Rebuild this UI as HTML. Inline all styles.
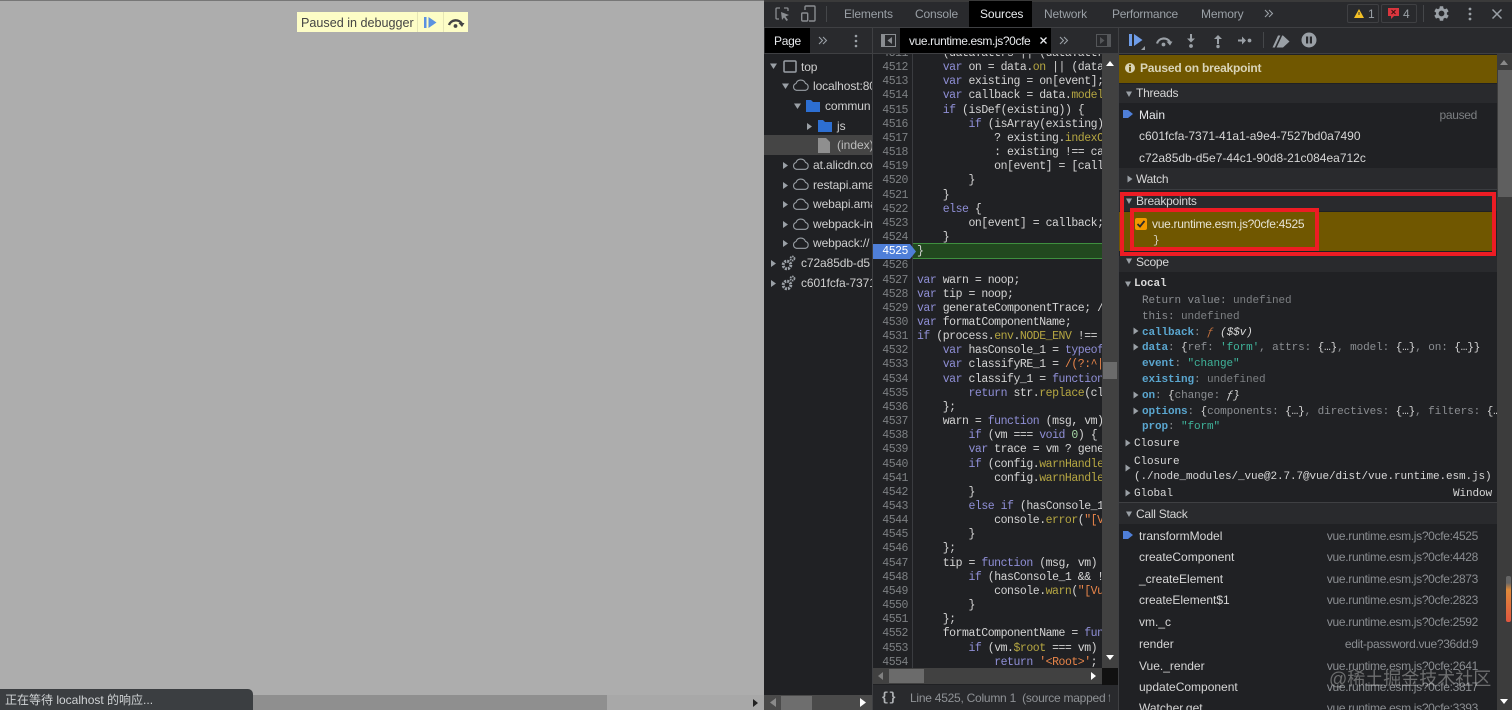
<!DOCTYPE html>
<html lang="zh">
<head>
<meta charset="utf-8">
<title>DevTools</title>
<style>
html,body{margin:0;padding:0;width:1512px;height:710px;overflow:hidden;background:#202124}
body{position:relative;font-family:"Liberation Sans","Noto Sans CJK SC",sans-serif;font-size:12px;color:#d6d6d6;filter:blur(.3px)}
.a{position:absolute}
.t{position:absolute;white-space:pre;line-height:16px}
.m{font-family:"Liberation Mono",monospace;font-size:11px;letter-spacing:-.1px}
svg{position:absolute;display:block;overflow:visible}
pre{margin:0;font-family:"Liberation Mono",monospace;font-size:11.5px;letter-spacing:-.47px;line-height:14.16px}
.k{color:#8f8fd6}.p{color:#b5a642}.s{color:#e8854a}.n{color:#a6d8a6}.c{color:#d4d4d4}
.tab{color:#9aa0a6;top:6px;letter-spacing:-.15px}
.sec{left:1136px;color:#d6d6d6;letter-spacing:-.25px}
.src{color:#8a8d91;text-align:right;right:34px;letter-spacing:-.32px}
.r{background:#3a3c40;height:1px;left:1119px;width:378px}
.key{color:#5aa6cf;font-weight:bold}
.g{color:#8b8e92}
.w{color:#d8d8d8}
.tree{color:#cfcfcf;letter-spacing:-.1px}
.st{color:#d6d6d6;left:1139px}
</style>
</head>
<body>
<!-- left page -->
<div class="a" style="left:0;top:0;width:764px;height:710px;background:#adadad"></div>
<div class="a" style="left:0;top:0;width:764px;height:1px;background:#777"></div>
<div class="a" style="left:0;top:695px;width:764px;height:15px;background:#a8a8a8"></div>
<div class="a" style="left:253px;top:695px;width:354px;height:15px;background:#8f8f8f"></div>
<svg style="left:753px;top:699px" width="5" height="8"><path d="M0 0L5 4L0 8Z" fill="#222"/></svg>
<div class="a" style="left:0;top:689px;width:253px;height:21px;background:#3b3e41;border-top-right-radius:5px"></div>
<div class="t" style="left:5px;top:692px;color:#cfd2d4;font-size:12px">正在等待 localhost 的响应...</div>
<!-- paused overlay -->
<div class="a" style="left:297px;top:12px;width:171px;height:20px;background:#fdfdc6"></div>
<div class="a" style="left:417px;top:12px;width:1px;height:20px;background:#e6e6b5"></div>
<div class="a" style="left:443px;top:12px;width:1px;height:20px;background:#e6e6b5"></div>
<div class="t" style="left:301px;top:15px;color:#444;font-size:12.6px">Paused in debugger</div>
<svg style="left:424px;top:17px" width="13" height="11"><rect x="0" y="0" width="2.500" height="11" fill="#5b92e0"/><path d="M4.500 0L12.500 5.500L4.500 11Z" fill="#5b92e0"/></svg>
<svg style="left:447px;top:17px" width="18" height="11"><path d="M2 8A7 6.500 0 0 1 15 7" fill="none" stroke="#444" stroke-width="2.400"/><path d="M11.500 6L17.500 6L15 10Z" fill="#444"/><circle cx="8.500" cy="9" r="1.900" fill="#444"/></svg>

<!-- top bar -->
<div class="a" style="left:764px;top:0;width:748px;height:710px;background:#292a2d"></div>
<div class="a" style="left:764px;top:0;width:748px;height:2px;background:#3a3a3a"></div>
<div class="a" style="left:764px;top:27px;width:748px;height:1px;background:#3f4043"></div>
<div class="a" style="left:969px;top:1px;width:63px;height:26px;background:#000"></div>
<svg style="left:775px;top:7px" width="15" height="14"><path d="M5 1H2Q1 1 1 2V11Q1 12 2 12H4M9 1H12Q13 1 13 2V4" fill="none" stroke="#8a8d91" stroke-width="1.300"/><path d="M6 5L14 8L10.500 9.500L13 13L11.500 14L9 10.500L7 13Z" fill="#8a8d91"/></svg>
<svg style="left:800px;top:5px" width="16" height="17"><path d="M5 5V2Q5 1 6 1H14Q15 1 15 2V15Q15 16 14 16H9" fill="none" stroke="#8a8d91" stroke-width="1.400"/><rect x="1.700" y="8" width="6" height="8" rx="1" fill="none" stroke="#8a8d91" stroke-width="1.400"/></svg>
<div class="a" style="left:826px;top:6px;width:1px;height:16px;background:#45474a"></div>
<div class="t tab" style="left:844px">Elements</div>
<div class="t tab" style="left:915px">Console</div>
<div class="t" style="left:980px;top:6px;color:#e8eaed;letter-spacing:-.1px">Sources</div>
<div class="t tab" style="left:1044px">Network</div>
<div class="t tab" style="left:1112px;letter-spacing:-.25px">Performance</div>
<div class="t tab" style="left:1201px">Memory</div>
<svg style="left:1265px;top:10px" width="8" height="7"><path d="M0 0L3.500 3.500L0 7M4 0L7.500 3.500L4 7" fill="none" stroke="#9aa0a6" stroke-width="1.100"/></svg>
<div class="a" style="left:1347px;top:4px;width:32px;height:19px;border:1px solid #3f4043;border-radius:2px;box-sizing:border-box"></div>
<div class="a" style="left:1381px;top:4px;width:36px;height:19px;border:1px solid #3f4043;border-radius:2px;box-sizing:border-box"></div>
<svg style="left:1354px;top:9px" width="10" height="9"><path d="M5 0L10 9H0Z" fill="#f4c025"/><rect x="4.500" y="3" width="1" height="3" fill="#333"/></svg>
<div class="t g" style="left:1368px;top:6px;color:#9aa0a6">1</div>
<svg style="left:1388px;top:8px" width="11" height="11"><path d="M0 0H11V8H6L3 11V8H0Z" fill="#d9363e"/><path d="M3.500 2L7.500 6M7.500 2L3.500 6" stroke="#3a1010" stroke-width="1"/></svg>
<div class="t g" style="left:1403px;top:6px;color:#9aa0a6">4</div>
<div class="a" style="left:1423px;top:5px;width:1px;height:17px;background:#45474a"></div>
<svg style="left:1434px;top:6px" width="15" height="15" viewBox="3 3 18 18"><path fill="#9aa0a6" d="M19.400 13a7.500 7.500 0 0 0 0-2l2.100-1.600-2-3.500-2.500 1a7.500 7.500 0 0 0-1.700-1L15 3.300h-4l-.4 2.600a7.500 7.500 0 0 0-1.700 1l-2.500-1-2 3.500L6.500 11a7.500 7.500 0 0 0 0 2l-2.100 1.600 2 3.500 2.500-1a7.500 7.500 0 0 0 1.700 1l.4 2.600h4l.4-2.600a7.500 7.500 0 0 0 1.700-1l2.500 1 2-3.500zM13 15.500a3.500 3.500 0 1 1 0-7 3.500 3.500 0 0 1 0 7z" transform="translate(-1 0)"/></svg>
<svg style="left:1468px;top:7px" width="4" height="14"><circle cx="2" cy="2" r="1.400" fill="#9aa0a6"/><circle cx="2" cy="7" r="1.400" fill="#9aa0a6"/><circle cx="2" cy="12" r="1.400" fill="#9aa0a6"/></svg>
<svg style="left:1492px;top:9px" width="10" height="10"><path d="M.5.500L9.500 9.500M9.500.500L.5 9.500" stroke="#9aa0a6" stroke-width="1.500"/></svg>

<!-- second toolbar -->
<div class="a" style="left:764px;top:53px;width:748px;height:1px;background:#3f4043"></div>
<div class="a" style="left:765px;top:28px;width:45px;height:25px;background:#000"></div>
<div class="t" style="left:774px;top:33px;color:#e8eaed;letter-spacing:-.3px">Page</div>
<svg style="left:819px;top:37px" width="8" height="7"><path d="M0 0L3.500 3.500L0 7M4 0L7.500 3.500L4 7" fill="none" stroke="#9aa0a6" stroke-width="1.100"/></svg>
<svg style="left:854px;top:34px" width="4" height="14"><circle cx="2" cy="2" r="1.300" fill="#9aa0a6"/><circle cx="2" cy="7" r="1.300" fill="#9aa0a6"/><circle cx="2" cy="12" r="1.300" fill="#9aa0a6"/></svg>
<div class="a" style="left:872px;top:28px;width:1px;height:682px;background:#3f4043"></div>
<svg style="left:881px;top:34px" width="15" height="13"><rect x=".5" y=".5" width="14" height="12" fill="none" stroke="#8a8d91"/><rect x="1" y="1" width="3" height="11" fill="#8a8d91"/><path d="M11 3V10L6.500 6.500Z" fill="#8a8d91"/></svg>
<div class="a" style="left:900px;top:28px;width:151px;height:25px;background:#000"></div>
<div class="t" style="left:909px;top:33px;color:#e8eaed;letter-spacing:-.38px">vue.runtime.esm.js?0cfe</div>
<svg style="left:1040px;top:37px" width="7" height="7"><path d="M.5.500L6.500 6.500M6.500.500L.5 6.500" stroke="#e8eaed" stroke-width="1.300"/></svg>
<svg style="left:1060px;top:37px" width="8" height="7"><path d="M0 0L3.500 3.500L0 7M4 0L7.500 3.500L4 7" fill="none" stroke="#9aa0a6" stroke-width="1.100"/></svg>
<svg style="left:1096px;top:34px" width="15" height="13"><rect x=".5" y=".5" width="14" height="12" fill="none" stroke="#55575a"/><rect x="11" y="1" width="3" height="11" fill="#55575a"/><path d="M4 3V10L8.500 6.500Z" fill="#55575a"/></svg>
<div class="a" style="left:1118px;top:28px;width:1px;height:682px;background:#3f4043"></div>
<!-- debug toolbar -->
<svg style="left:1129px;top:34px" width="16" height="15"><rect x="0" y="0" width="3" height="12" fill="#6f9de8"/><path d="M5 0L13.500 6L5 12Z" fill="#6f9de8"/><path d="M12 16H16V12Z" fill="#9aa0a6"/></svg>
<svg style="left:1155px;top:35px" width="18" height="12"><path d="M2 8.500A7 6.500 0 0 1 15 7" fill="none" stroke="#9aa0a6" stroke-width="2.200"/><path d="M11.500 6.500L17.500 6.500L15 10.500Z" fill="#9aa0a6"/><circle cx="8.500" cy="9.500" r="1.900" fill="#9aa0a6"/></svg>
<svg style="left:1186px;top:34px" width="10" height="14"><path d="M5 0V6" stroke="#9aa0a6" stroke-width="2"/><path d="M1 4.500H9L5 8.500Z" fill="#9aa0a6"/><circle cx="5" cy="12" r="1.900" fill="#9aa0a6"/></svg>
<svg style="left:1213px;top:34px" width="10" height="14"><path d="M5 4V10" stroke="#9aa0a6" stroke-width="2"/><path d="M1 5H9L5 1Z" fill="#9aa0a6"/><circle cx="5" cy="12.500" r="1.700" fill="#9aa0a6"/></svg>
<svg style="left:1238px;top:36px" width="14" height="9"><path d="M0 4.500H6" stroke="#9aa0a6" stroke-width="2"/><path d="M4 .5L8 4.500L4 8.500Z" fill="#9aa0a6"/><circle cx="11.500" cy="4.500" r="1.900" fill="#9aa0a6"/></svg>
<div class="a" style="left:1263px;top:32px;width:1px;height:16px;background:#45474a"></div>
<svg style="left:1272px;top:35px" width="18" height="13"><path d="M6 0.500H11L17.500 6.500L11 12.500H0.500Z" fill="#9aa0a6"/><path d="M3 14L10 -1" stroke="#292a2d" stroke-width="1.600"/></svg>
<svg style="left:1301px;top:32px" width="16" height="16"><circle cx="8" cy="8" r="7.500" fill="#9aa0a6"/><rect x="5" y="4.500" width="2.200" height="7" fill="#292a2d"/><rect x="8.800" y="4.500" width="2.200" height="7" fill="#292a2d"/></svg>

<!-- navigator -->
<div class="a" style="left:764px;top:54px;width:108px;height:641px;background:#202124;overflow:hidden" id="nav">
<div class="a" style="left:0;top:81px;width:108px;height:20px;background:#454545"></div>
<svg style="left:5px;top:9px" width="9" height="7"><path d="M1 .5H8L4.500 6Z" fill="#9aa0a6"/></svg>
<svg style="left:19px;top:6px" width="14" height="13"><rect x="1" y="1" width="12" height="11" rx="1" fill="none" stroke="#9aa0a6" stroke-width="1.500"/></svg>
<div class="t tree" style="left:37px;top:5px">top</div>
<svg style="left:17px;top:29px" width="9" height="7"><path d="M1 .5H8L4.500 6Z" fill="#9aa0a6"/></svg>
<svg style="left:28px;top:25px" width="18" height="12"><path d="M4.500 11.300A3.500 3.500 0 0 1 4 4.500 5 5 0 0 1 13.500 4.500 3.500 3.500 0 0 1 13.500 11.300Z" fill="none" stroke="#9aa0a6" stroke-width="1.100"/></svg>
<div class="t tree" style="left:49px;top:24px">localhost:80</div>
<svg style="left:29px;top:49px" width="9" height="7"><path d="M1 .5H8L4.500 6Z" fill="#9aa0a6"/></svg>
<svg style="left:42px;top:46px" width="14" height="12"><path d="M0 0H5L7 2H14V12H0Z" fill="#2d6fd2"/></svg>
<div class="t tree" style="left:61px;top:44px">commun</div>
<svg style="left:42px;top:68px" width="7" height="9"><path d="M1 1L6 4.500L1 8Z" fill="#9aa0a6"/></svg>
<svg style="left:54px;top:66px" width="14" height="12"><path d="M0 0H5L7 2H14V12H0Z" fill="#2d6fd2"/></svg>
<div class="t tree" style="left:73px;top:64px">js</div>
<svg style="left:54px;top:84px" width="12" height="15"><path d="M0 0H8L12 4V15H0Z" fill="#8f8f8f"/></svg>
<div class="t" style="left:73px;top:83px;color:#bdbdbd">(index)</div>
<svg style="left:18px;top:107px" width="7" height="9"><path d="M1 1L6 4.500L1 8Z" fill="#9aa0a6"/></svg>
<svg style="left:28px;top:104px" width="18" height="12"><path d="M4.500 11.300A3.500 3.500 0 0 1 4 4.500 5 5 0 0 1 13.500 4.500 3.500 3.500 0 0 1 13.500 11.300Z" fill="none" stroke="#9aa0a6" stroke-width="1.100"/></svg>
<div class="t tree" style="left:49px;top:103px">at.alicdn.co</div>
<svg style="left:18px;top:127px" width="7" height="9"><path d="M1 1L6 4.500L1 8Z" fill="#9aa0a6"/></svg>
<svg style="left:28px;top:124px" width="18" height="12"><path d="M4.500 11.300A3.500 3.500 0 0 1 4 4.500 5 5 0 0 1 13.500 4.500 3.500 3.500 0 0 1 13.500 11.300Z" fill="none" stroke="#9aa0a6" stroke-width="1.100"/></svg>
<div class="t tree" style="left:49px;top:123px">restapi.ama</div>
<svg style="left:18px;top:146px" width="7" height="9"><path d="M1 1L6 4.500L1 8Z" fill="#9aa0a6"/></svg>
<svg style="left:28px;top:144px" width="18" height="12"><path d="M4.500 11.300A3.500 3.500 0 0 1 4 4.500 5 5 0 0 1 13.500 4.500 3.500 3.500 0 0 1 13.500 11.300Z" fill="none" stroke="#9aa0a6" stroke-width="1.100"/></svg>
<div class="t tree" style="left:49px;top:142px">webapi.ama</div>
<svg style="left:18px;top:166px" width="7" height="9"><path d="M1 1L6 4.500L1 8Z" fill="#9aa0a6"/></svg>
<svg style="left:28px;top:164px" width="18" height="12"><path d="M4.500 11.300A3.500 3.500 0 0 1 4 4.500 5 5 0 0 1 13.500 4.500 3.500 3.500 0 0 1 13.500 11.300Z" fill="none" stroke="#9aa0a6" stroke-width="1.100"/></svg>
<div class="t tree" style="left:49px;top:162px">webpack-in</div>
<svg style="left:18px;top:185px" width="7" height="9"><path d="M1 1L6 4.500L1 8Z" fill="#9aa0a6"/></svg>
<svg style="left:28px;top:183px" width="18" height="12"><path d="M4.500 11.300A3.500 3.500 0 0 1 4 4.500 5 5 0 0 1 13.500 4.500 3.500 3.500 0 0 1 13.500 11.300Z" fill="none" stroke="#9aa0a6" stroke-width="1.100"/></svg>
<div class="t tree" style="left:49px;top:181px">webpack://</div>
<svg style="left:6px;top:205px" width="7" height="9"><path d="M1 1L6 4.500L1 8Z" fill="#9aa0a6"/></svg>
<svg style="left:17px;top:201px" width="15" height="16" viewBox="0 0 15 16"><circle cx="6" cy="10" r="3.800" fill="none" stroke="#9aa0a6" stroke-width="3" stroke-dasharray="2 1"/><circle cx="11.500" cy="3.500" r="2" fill="none" stroke="#9aa0a6" stroke-width="1.800" stroke-dasharray="1.500 .7"/></svg>
<div class="t tree" style="left:37px;top:201px">c72a85db-d5</div>
<svg style="left:6px;top:225px" width="7" height="9"><path d="M1 1L6 4.500L1 8Z" fill="#9aa0a6"/></svg>
<svg style="left:17px;top:221px" width="15" height="16" viewBox="0 0 15 16"><circle cx="6" cy="10" r="3.800" fill="none" stroke="#9aa0a6" stroke-width="3" stroke-dasharray="2 1"/><circle cx="11.500" cy="3.500" r="2" fill="none" stroke="#9aa0a6" stroke-width="1.800" stroke-dasharray="1.500 .7"/></svg>
<div class="t tree" style="left:37px;top:221px">c601fcfa-7371</div>
</div>
<div class="a" style="left:764px;top:695px;width:108px;height:15px;background:#4a4a4a"></div>
<div class="a" style="left:781px;top:696px;width:31px;height:14px;background:#6e6e6e"></div>
<svg style="left:770px;top:698px" width="6" height="9"><path d="M6 0L0 4.500L6 9Z" fill="#8a8a8a"/></svg>
<svg style="left:860px;top:698px" width="6" height="9"><path d="M0 0L6 4.500L0 9Z" fill="#fff"/></svg>

<!-- editor -->
<div class="a" style="left:873px;top:54px;width:245px;height:631px;background:#202124;overflow:hidden">
<div class="a" style="left:39px;top:0;width:1px;height:614px;background:#3a3c40"></div>
<div class="a" style="left:40px;top:189px;width:190px;height:16px;background:#22481f;border-top:1px solid #3f8f3f;border-bottom:1px solid #3f8f3f;box-sizing:border-box"></div>
<svg style="left:0;top:190px" width="43" height="15"><path d="M0 0H37L43 7.500L37 15H0Z" fill="#4f7fd8"/></svg>
<pre class="a" style="left:0;top:-7px;width:35px;text-align:right;color:#7d8083">4511
4512
4513
4514
4515
4516
4517
4518
4519
4520
4521
4522
4523
4524
<span style="color:#fff">4525</span>
4526
4527
4528
4529
4530
4531
4532
4533
4534
4535
4536
4537
4538
4539
4540
4541
4542
4543
4544
4545
4546
4547
4548
4549
4550
4551
4552
4553
4554</pre>
<div class="a" style="left:44px;top:0;width:185px;height:614px;overflow:hidden">
<pre class="a" style="left:0;top:-7px;color:#d4d4d4">    (data.attrs || (data.attrs
    <span class="k">var</span> on = data.<span class="p">on</span> || (data
    <span class="k">var</span> existing = on[event];
    <span class="k">var</span> callback = data.<span class="p">model</span>
    <span class="k">if</span> (isDef(existing)) {   <span style="color:#a0522d">●</span>
        <span class="k">if</span> (isArray(existing)
            ? existing.<span class="p">indexOf</span>
            : existing !== ca
            on[event] = [call
        }
    }
    <span class="k">else</span> {
        on[event] = callback;
    }
}

<span class="k">var</span> warn = noop;
<span class="k">var</span> tip = noop;
<span class="k">var</span> generateComponentTrace; /
<span class="k">var</span> formatComponentName;
<span class="k">if</span> (process.<span class="p">env</span>.<span class="p">NODE_ENV</span> !==
    <span class="k">var</span> hasConsole_1 = <span class="k">typeof</span>
    <span class="k">var</span> classifyRE_1 = <span class="s">/(?:^|</span>
    <span class="k">var</span> classify_1 = <span class="k">function</span>
        <span class="k">return</span> str.<span class="p">replace</span>(cl
    };
    warn = <span class="k">function</span> (msg, vm)
        <span class="k">if</span> (vm === <span class="k">void</span> <span class="n">0</span>) {
        <span class="k">var</span> trace = vm ? gene
        <span class="k">if</span> (config.<span class="p">warnHandle</span>
            config.<span class="p">warnHandle</span>
        }
        <span class="k">else</span> <span class="k">if</span> (hasConsole_1
            console.<span class="p">error</span>(<span class="s">"[V</span>
        }
    };
    tip = <span class="k">function</span> (msg, vm)
        <span class="k">if</span> (hasConsole_1 &amp;&amp; !
            console.<span class="p">warn</span>(<span class="s">"[Vu</span>
        }
    };
    formatComponentName = <span class="k">fun</span>
        <span class="k">if</span> (vm.<span class="p">$root</span> === vm)
            <span class="k">return</span> <span class="s">'&lt;Root&gt;'</span>;</pre>
</div>
<!-- vertical scrollbar -->
<div class="a" style="left:229px;top:0;width:16px;height:614px;background:#414141"></div>
<div class="a" style="left:230px;top:308px;width:14px;height:17px;background:#6b6b6b"></div>
<svg style="left:233px;top:7px" width="8" height="5"><path d="M0 5L4 0L8 5Z" fill="#fff"/></svg>
<svg style="left:233px;top:601px" width="8" height="5"><path d="M0 0H8L4 5Z" fill="#fff"/></svg>
<!-- horizontal scrollbar -->
<div class="a" style="left:0;top:614px;width:229px;height:16px;background:#414141"></div>
<div class="a" style="left:16px;top:615px;width:35px;height:14px;background:#6b6b6b"></div>
<div class="a" style="left:229px;top:614px;width:16px;height:17px;background:#111"></div>
<svg style="left:5px;top:618px" width="5" height="8"><path d="M5 0L0 4L5 8Z" fill="#808080"/></svg>
<svg style="left:218px;top:618px" width="5" height="8"><path d="M0 0L5 4L0 8Z" fill="#fff"/></svg>
</div>
<div class="a" style="left:873px;top:685px;width:245px;height:25px;background:#292a2d"></div>
<div class="t" style="left:881px;top:690px;color:#b0b3b6;font-family:'Liberation Mono',monospace;font-size:13px;font-weight:bold;letter-spacing:-.2px">{}</div>
<div class="a" style="left:873px;top:685px;width:237px;height:25px;overflow:hidden"><div class="t" style="left:37px;top:5px;color:#8f9296;letter-spacing:-.25px">Line 4525, Column 1  (source mapped f</div></div>

<!-- right sidebar -->
<div class="a" style="left:1119px;top:54px;width:378px;height:656px;background:#202124"></div>
<div class="a" style="left:1119px;top:55px;width:378px;height:28px;background:#705700"></div>
<svg style="left:1125px;top:63px" width="10" height="10"><circle cx="5" cy="5" r="5" fill="#d9d4b8"/><rect x="4" y="4" width="2" height="4.500" fill="#705700"/><rect x="4" y="1.500" width="2" height="1.700" fill="#705700"/></svg>
<div class="t" style="left:1140px;top:60px;color:#d9d4b8;font-weight:bold;letter-spacing:-.2px">Paused on breakpoint</div>

<div class="a" style="left:1119px;top:84px;width:378px;height:19px;background:#292a2d"></div>
<div class="r" style="top:103px"></div>
<svg style="left:1125px;top:91px" width="8" height="7"><path d="M1 .5H7L4 6Z" fill="#9aa0a6"/></svg>
<div class="t sec" style="top:85px">Threads</div>
<svg style="left:1123px;top:109px" width="10" height="10"><path d="M0 1H5L10 5L5 9H0Z" fill="#4f7fd8"/></svg>
<div class="t st" style="top:107px;color:#e8eaed">Main</div>
<div class="t src" style="top:107px;right:35px;color:#7d8083">paused</div>
<div class="r" style="top:125px"></div>
<div class="t st" style="top:128px">c601fcfa-7371-41a1-a9e4-7527bd0a7490</div>
<div class="r" style="top:146px"></div>
<div class="t st" style="top:150px">c72a85db-d5e7-44c1-90d8-21c084ea712c</div>
<div class="r" style="top:167px"></div>

<div class="a" style="left:1119px;top:168px;width:378px;height:21px;background:#292a2d"></div>
<svg style="left:1127px;top:175px" width="6" height="8"><path d="M.5 .5L5.500 4L.5 7.500Z" fill="#9aa0a6"/></svg>
<div class="t sec" style="top:171px">Watch</div>
<div class="a" style="left:1119px;top:189px;width:378px;height:1px;background:#3a3c40"></div>

<div class="a" style="left:1119px;top:192px;width:378px;height:19px;background:#292a2d"></div>
<svg style="left:1125px;top:198px" width="8" height="7"><path d="M1 .5H7L4 6Z" fill="#9aa0a6"/></svg>
<div class="t sec" style="top:193px">Breakpoints</div>
<div class="a" style="left:1119px;top:212px;width:374px;height:39px;background:#705700"></div>
<div class="a" style="left:1135px;top:218px;width:12px;height:12px;background:#f29900;border-radius:2px"></div>
<svg style="left:1136px;top:219px" width="10" height="10"><path d="M1.500 5L4 7.500L8.500 2" fill="none" stroke="#292a2d" stroke-width="1.800"/></svg>
<div class="t" style="left:1152px;top:216px;color:#e6e3d4;letter-spacing:-.28px">vue.runtime.esm.js?0cfe:4525</div>
<div class="t m" style="left:1153px;top:233px;color:#d6d3c4">}</div>
<div class="a" style="left:1120px;top:192px;width:376px;height:64px;border:4px solid #ed1c24;box-sizing:border-box"></div>
<div class="a" style="left:1130px;top:208px;width:189px;height:43px;border:4px solid #ed1c24;box-sizing:border-box"></div>

<div class="a" style="left:1119px;top:256px;width:378px;height:16px;background:#292a2d"></div>
<div class="r" style="top:272px"></div>
<svg style="left:1125px;top:258px" width="8" height="7"><path d="M1 .5H7L4 6Z" fill="#9aa0a6"/></svg>
<div class="t sec" style="top:254px">Scope</div>

<svg style="left:1124px;top:281px" width="8" height="7"><path d="M1 .5H7L4 6Z" fill="#9aa0a6"/></svg>
<div class="t m w" style="left:1134px;top:276px;font-weight:bold">Local</div>
<div class="t m g" style="left:1142px;top:293px">Return value: <span style="color:#7d8083">undefined</span></div>
<div class="t m g" style="left:1142px;top:309px">this: <span style="color:#7d8083">undefined</span></div>
<svg style="left:1133px;top:327px" width="6" height="8"><path d="M.5 .5L5.500 4L.5 7.500Z" fill="#9aa0a6"/></svg>
<div class="t m" style="left:1142px;top:325px"><span class="key">callback</span><span class="g">:</span> <span style="color:#c2703d;font-style:italic">ƒ</span> <span style="color:#d8d8d8;font-style:italic">($$v)</span></div>
<svg style="left:1133px;top:343px" width="6" height="8"><path d="M.5 .5L5.500 4L.5 7.500Z" fill="#9aa0a6"/></svg>
<div class="t m" style="left:1142px;top:340px"><span class="key">data</span><span class="g">:</span> <span class="w">{</span><span class="g">ref:</span> <span style="color:#3fb39a">'form'</span><span class="g">, attrs:</span> <span class="w">{…}</span><span class="g">, model:</span> <span class="w">{…}</span><span class="g">, on:</span> <span class="w">{…}}</span></div>
<div class="t m" style="left:1142px;top:356px"><span class="key">event</span><span class="g">:</span> <span style="color:#3fb39a">"change"</span></div>
<div class="t m" style="left:1142px;top:372px"><span class="key">existing</span><span class="g">:</span> <span style="color:#7d8083">undefined</span></div>
<svg style="left:1133px;top:391px" width="6" height="8"><path d="M.5 .5L5.500 4L.5 7.500Z" fill="#9aa0a6"/></svg>
<div class="t m" style="left:1142px;top:388px"><span class="key">on</span><span class="g">:</span> <span class="w">{</span><span class="g">change:</span> <span class="w" style="font-style:italic">ƒ}</span></div>
<svg style="left:1133px;top:407px" width="6" height="8"><path d="M.5 .5L5.500 4L.5 7.500Z" fill="#9aa0a6"/></svg>
<div class="a" style="left:1119px;top:404px;width:378px;height:16px;overflow:hidden"><div class="t m" style="left:23px;top:0"><span class="key">options</span><span class="g">:</span> <span class="w">{</span><span class="g">components:</span> <span class="w">{…}</span><span class="g">, directives:</span> <span class="w">{…}</span><span class="g">, filters:</span> <span class="w">{…</span></div></div>
<div class="t m" style="left:1142px;top:419px"><span class="key">prop</span><span class="g">:</span> <span style="color:#3fb39a">"form"</span></div>
<svg style="left:1125px;top:439px" width="6" height="8"><path d="M.5 .5L5.500 4L.5 7.500Z" fill="#9aa0a6"/></svg>
<div class="t m w" style="left:1134px;top:436px">Closure</div>
<svg style="left:1125px;top:464px" width="6" height="8"><path d="M.5 .5L5.500 4L.5 7.500Z" fill="#9aa0a6"/></svg>
<div class="t m w" style="left:1134px;top:454px">Closure</div>
<div class="t m w" style="left:1134px;top:469px">(./node_modules/_vue@2.7.7@vue/dist/vue.runtime.esm.js)</div>
<svg style="left:1125px;top:489px" width="6" height="8"><path d="M.5 .5L5.500 4L.5 7.500Z" fill="#9aa0a6"/></svg>
<div class="t m w" style="left:1134px;top:486px">Global</div>
<div class="t m w" style="right:20px;top:486px">Window</div>

<div class="a" style="left:1119px;top:502px;width:378px;height:22px;background:#292a2d;border-top:1px solid #3f4043;box-sizing:border-box"></div>
<div class="r" style="top:524px"></div>
<svg style="left:1125px;top:511px" width="8" height="7"><path d="M1 .5H7L4 6Z" fill="#9aa0a6"/></svg>
<div class="t sec" style="top:506px">Call Stack</div>

<svg style="left:1123px;top:530px" width="10" height="10"><path d="M0 1H5L10 5L5 9H0Z" fill="#4f7fd8"/></svg>
<div class="t st" style="top:528px">transformModel</div><div class="t src" style="top:528px">vue.runtime.esm.js?0cfe:4525</div>
<div class="r" style="top:545px"></div>
<div class="t st" style="top:549px">createComponent</div><div class="t src" style="top:549px">vue.runtime.esm.js?0cfe:4428</div>
<div class="r" style="top:567px"></div>
<div class="t st" style="top:571px">_createElement</div><div class="t src" style="top:571px">vue.runtime.esm.js?0cfe:2873</div>
<div class="r" style="top:589px"></div>
<div class="t st" style="top:592px">createElement$1</div><div class="t src" style="top:592px">vue.runtime.esm.js?0cfe:2823</div>
<div class="r" style="top:610px"></div>
<div class="t st" style="top:614px">vm._c</div><div class="t src" style="top:614px">vue.runtime.esm.js?0cfe:2592</div>
<div class="r" style="top:633px"></div>
<div class="t st" style="top:636px">render</div><div class="t src" style="top:636px">edit-password.vue?36dd:9</div>
<div class="r" style="top:654px"></div>
<div class="t st" style="top:658px">Vue._render</div><div class="t src" style="top:658px">vue.runtime.esm.js?0cfe:2641</div>
<div class="r" style="top:676px"></div>
<div class="t st" style="top:679px">updateComponent</div><div class="t src" style="top:679px">vue.runtime.esm.js?0cfe:3817</div>
<div class="r" style="top:697px"></div>
<div class="t st" style="top:700px">Watcher.get</div><div class="t src" style="top:700px">vue.runtime.esm.js?0cfe:3393</div>

<!-- sidebar scrollbar -->
<div class="a" style="left:1497px;top:54px;width:15px;height:656px;background:#3c3c3c"></div>
<div class="a" style="left:1498px;top:70px;width:14px;height:127px;background:#5f5f5f"></div>
<svg style="left:1500px;top:60px" width="8" height="5"><path d="M0 5L4 0L8 5Z" fill="#8a8a8a"/></svg>
<svg style="left:1500px;top:699px" width="8" height="5"><path d="M0 0H8L4 5Z" fill="#fff"/></svg>
<div class="a" style="left:1506px;top:576px;width:5px;height:46px;border-radius:2px;background:linear-gradient(#666 0,#666 15%,#e08a3a 30%,#e0563f 100%)"></div>

<!-- watermark -->
<div class="t" style="left:1329px;top:667px;font-size:18px;line-height:24px;color:rgba(215,215,215,.42)">@稀土掘金技术社区</div>
</body>
</html>
